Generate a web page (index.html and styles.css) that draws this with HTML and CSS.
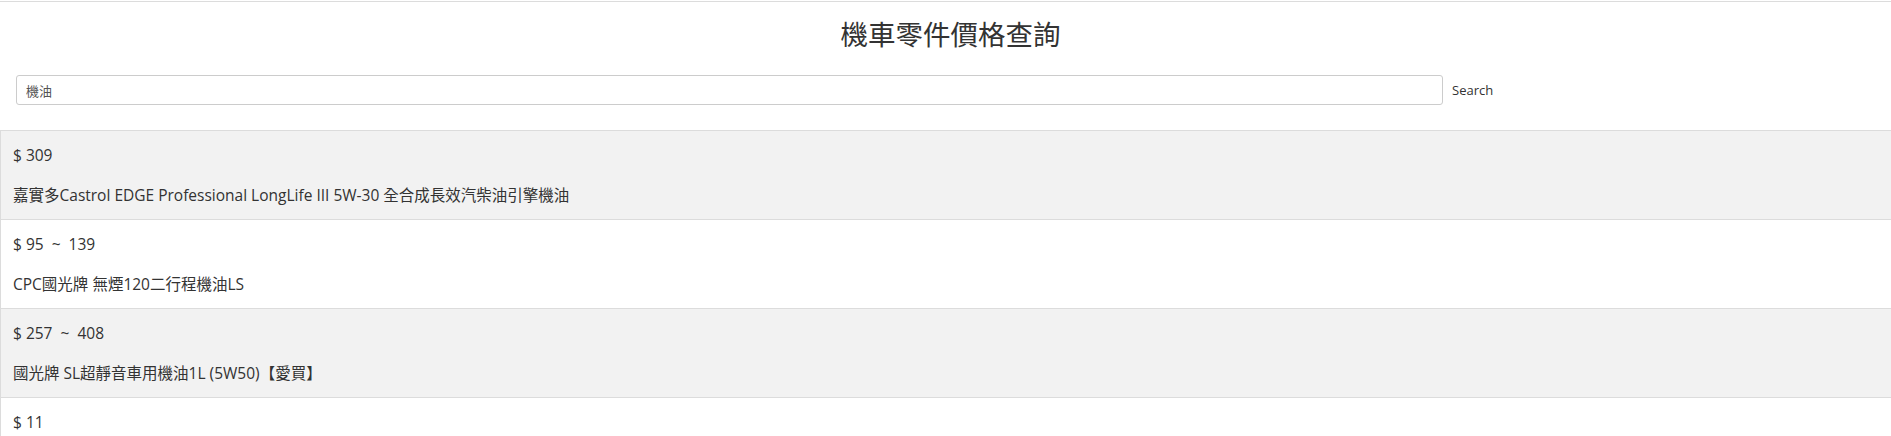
FILE: index.html
```
<!DOCTYPE html>
<html lang="zh-Hant">
<head>
<meta charset="utf-8">
<title>機車零件價格查詢</title>
<link rel="stylesheet" href="styles.css">
</head>
<body>
<div class="page">
  <h1 class="title">機車零件價格查詢</h1>
  <form class="search">
    <input class="search-input" type="text" value="機油">
    <button class="search-btn" type="button">Search</button>
  </form>
  <ul class="results">
    <li class="item">
      <div class="price">$ 309</div>
      <div class="name">嘉實多Castrol EDGE Professional LongLife III 5W-30 全合成長效汽柴油引擎機油</div>
    </li>
    <li class="item">
      <div class="price">$ 95 &nbsp;~ &nbsp;139</div>
      <div class="name">CPC國光牌 無煙120二行程機油LS</div>
    </li>
    <li class="item">
      <div class="price">$ 257 &nbsp;~ &nbsp;408</div>
      <div class="name">國光牌 SL超靜音車用機油1L (5W50)【愛買】</div>
    </li>
    <li class="item">
      <div class="price">$ 11</div>
      <div class="name">國光牌 機油</div>
    </li>
  </ul>
</div>
</body>
</html>
```

FILE: styles.css
```
html, body {
  margin: 0;
  padding: 0;
  background: #fff;
}
body {
  font-family: "Open Sans", "Noto Sans CJK TC", sans-serif;
  color: #333;
  overflow: hidden;
}
.page {
  border-top: 1px solid #dcdcdc;
  margin-top: 1px;
}
.title {
  margin: 0;
  padding-top: 12px;
  height: 47px;
  text-align: center;
  font-family: "Noto Sans CJK TC", sans-serif;
  font-weight: 400;
  font-size: 27.5px;
  line-height: 38px;
  color: #333;
  padding-left: 10px;
}
.search {
  display: flex;
  align-items: center;
  gap: 8px;
  margin: 14px 0 0 16px;
  width: 1480px;
}
.search-input {
  width: 1427px;
  height: 30px;
  box-sizing: border-box;
  border: 1px solid #ccc;
  border-radius: 3px;
  padding: 0 9px;
  font-family: "Noto Sans CJK TC", sans-serif;
  font-size: 13px;
  color: #555;
  outline: none;
}
.search-btn {
  border: none;
  background: none;
  padding: 0;
  margin-left: 1px;
  font-family: "Open Sans", sans-serif;
  font-size: 13px;
  color: #333;
}
.results {
  list-style: none;
  margin: 25px 0 0;
  padding: 0;
}
.item {
  border-top: 1px solid #dcdcdc;
  border-left: 1px solid #dcdcdc;
  padding: 12px 12px 12px;
  font-size: 15.5px;
  color: #333;
}
.item:nth-child(odd) {
  background: #f2f2f2;
}
.price {
  line-height: 24px;
}
.name {
  margin-top: 16px;
  line-height: 24px;
}
```
